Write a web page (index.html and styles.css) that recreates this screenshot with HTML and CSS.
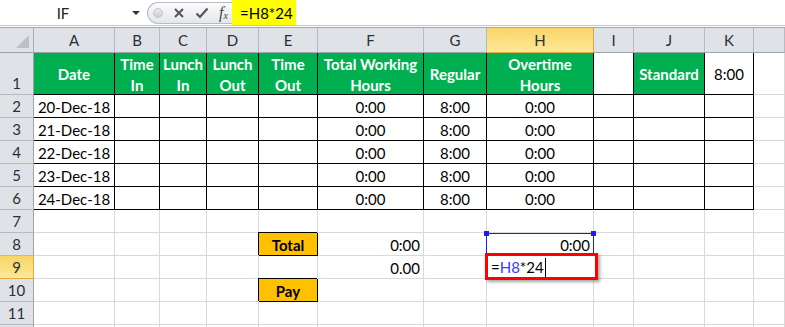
FILE: index.html
```html
<!DOCTYPE html>
<html lang="en">
<head>
    <meta charset="UTF-8">
    <title>Overtime Sheet</title>
    <link rel="stylesheet" href="styles.css">
</head>
<body>

    <div class="formula-bar">
        <div class="name-box"><span class="name">IF</span><span class="arrow"></span></div>
        <div class="fx-buttons">
            <span class="grip"></span>
            <svg class="btn" width="12" height="12" viewBox="0 0 12 12"><path d="M2 2 L10 10 M10 2 L2 10" stroke="#555" stroke-width="2" fill="none"/></svg>
            <svg class="btn" width="14" height="12" viewBox="0 0 14 12"><path d="M1.5 6.5 L5 10 L12.5 1.5" stroke="#555" stroke-width="2.2" fill="none"/></svg>
            <span class="fx"><i>f</i><sub>x</sub></span>
        </div>
        <div class="formula">=H8*24</div>
    </div>

    <div class="sheet">
        <!-- column headers -->
        <div class="corner"><span class="corner-mark"></span></div>
        <div class="ch">A</div><div class="ch">B</div><div class="ch">C</div><div class="ch">D</div><div class="ch">E</div><div class="ch">F</div><div class="ch">G</div><div class="ch sel">H</div><div class="ch">I</div><div class="ch">J</div><div class="ch">K</div><div class="ch"></div>

        <!-- row 1 -->
        <div class="rh">1</div>
        <div class="cell g">Date</div>
        <div class="cell g">Time<br>In</div>
        <div class="cell g">Lunch<br>In</div>
        <div class="cell g">Lunch<br>Out</div>
        <div class="cell g">Time<br>Out</div>
        <div class="cell g">Total Working<br>Hours</div>
        <div class="cell g">Regular</div>
        <div class="cell g">Overtime<br>Hours</div>
        <div class="cell b"></div>
        <div class="cell g">Standard</div>
        <div class="cell b c">8:00</div>
        <div class="cell"></div>

        <!-- rows 2-6 -->
        <div class="rh">2</div><div class="cell b c">20-Dec-18</div><div class="cell b"></div><div class="cell b"></div><div class="cell b"></div><div class="cell b"></div><div class="cell b c">0:00</div><div class="cell b c">8:00</div><div class="cell b c">0:00</div><div class="cell b"></div><div class="cell b"></div><div class="cell b"></div><div class="cell"></div>
        <div class="rh">3</div><div class="cell b c">21-Dec-18</div><div class="cell b"></div><div class="cell b"></div><div class="cell b"></div><div class="cell b"></div><div class="cell b c">0:00</div><div class="cell b c">8:00</div><div class="cell b c">0:00</div><div class="cell b"></div><div class="cell b"></div><div class="cell b"></div><div class="cell"></div>
        <div class="rh">4</div><div class="cell b c">22-Dec-18</div><div class="cell b"></div><div class="cell b"></div><div class="cell b"></div><div class="cell b"></div><div class="cell b c">0:00</div><div class="cell b c">8:00</div><div class="cell b c">0:00</div><div class="cell b"></div><div class="cell b"></div><div class="cell b"></div><div class="cell"></div>
        <div class="rh">5</div><div class="cell b c">23-Dec-18</div><div class="cell b"></div><div class="cell b"></div><div class="cell b"></div><div class="cell b"></div><div class="cell b c">0:00</div><div class="cell b c">8:00</div><div class="cell b c">0:00</div><div class="cell b"></div><div class="cell b"></div><div class="cell b"></div><div class="cell"></div>
        <div class="rh">6</div><div class="cell b c">24-Dec-18</div><div class="cell b"></div><div class="cell b"></div><div class="cell b"></div><div class="cell b"></div><div class="cell b c">0:00</div><div class="cell b c">8:00</div><div class="cell b c">0:00</div><div class="cell b"></div><div class="cell b"></div><div class="cell b"></div><div class="cell"></div>

        <!-- row 7 -->
        <div class="rh">7</div><div class="cell"></div><div class="cell"></div><div class="cell"></div><div class="cell"></div><div class="cell"></div><div class="cell"></div><div class="cell"></div><div class="cell"></div><div class="cell"></div><div class="cell"></div><div class="cell"></div><div class="cell"></div>

        <!-- row 8 -->
        <div class="rh">8</div><div class="cell"></div><div class="cell"></div><div class="cell"></div><div class="cell"></div>
        <div class="cell o">Total</div>
        <div class="cell r">0:00</div>
        <div class="cell"></div>
        <div class="cell r ref">0:00<span class="ref-box"><span class="dot left"></span><span class="dot right"></span></span></div>
        <div class="cell"></div><div class="cell"></div><div class="cell"></div><div class="cell"></div>

        <!-- row 9 -->
        <div class="rh sel">9</div><div class="cell"></div><div class="cell"></div><div class="cell"></div><div class="cell"></div><div class="cell"></div>
        <div class="cell r">0.00</div>
        <div class="cell"></div>
        <div class="cell edit"><span class="edit-box">=<span class="ref-text">H8</span>*24<span class="caret"></span></span></div>
        <div class="cell"></div><div class="cell"></div><div class="cell"></div><div class="cell"></div>

        <!-- row 10 -->
        <div class="rh">10</div><div class="cell"></div><div class="cell"></div><div class="cell"></div><div class="cell"></div>
        <div class="cell o">Pay</div>
        <div class="cell"></div><div class="cell"></div><div class="cell"></div><div class="cell"></div><div class="cell"></div><div class="cell"></div><div class="cell"></div>

        <!-- row 11 -->
        <div class="rh">11</div><div class="cell"></div><div class="cell"></div><div class="cell"></div><div class="cell"></div><div class="cell"></div><div class="cell"></div><div class="cell"></div><div class="cell"></div><div class="cell"></div><div class="cell"></div><div class="cell"></div><div class="cell"></div>

        <!-- row 12, only its top edge shows -->
        <div class="rh"></div><div class="cell"></div><div class="cell"></div><div class="cell"></div><div class="cell"></div><div class="cell"></div><div class="cell"></div><div class="cell"></div><div class="cell"></div><div class="cell"></div><div class="cell"></div><div class="cell"></div><div class="cell"></div>
    </div>

</body>
</html>
```

FILE: styles.css
```css
body {
    margin: 0;
    width: 785px;
    height: 327px;
    overflow: hidden;
    background: #fff;
    color: #000;
    font-family: Lato, "Liberation Sans", sans-serif;
    font-size: 15px;
}

/* Barra de formulas */
.formula-bar {
    display: flex;
    height: 25px;
    border-bottom: 1px solid #c4c7cc;
}

.name-box {
    width: 147px;
    display: flex;
    align-items: center;
}

.name {
    flex: 1;
    text-align: center;
    padding-right: 6px;
    color: #222;
}

.arrow {
    width: 0;
    height: 0;
    margin-right: 7px;
    border-style: solid;
    border-width: 4px 4px 0 4px;
    border-color: #333 transparent transparent transparent;
}

.fx-buttons {
    width: 85px;
    height: 22px;
    margin-top: 2px;
    box-sizing: border-box;
    display: flex;
    align-items: center;
    gap: 10px;
    padding-left: 5px;
    background: linear-gradient(#fbfbfc, #e4e7eb);
    border: 1px solid #b8bcc2;
    border-right: none;
    border-radius: 11px 0 0 11px;
}

.grip {
    width: 8px;
    height: 8px;
    border-radius: 50%;
    background: linear-gradient(#e9ebee, #c9cdd2);
    border: 1px solid #c3c6cb;
}

.btn {
    display: block;
}

.fx {
    font-family: "Liberation Serif", serif;
    font-size: 16px;
    color: #444;
}

.fx sub {
    font-size: 10px;
    font-style: italic;
    vertical-align: -1px;
}

.formula {
    width: 64px;
    box-sizing: border-box;
    padding-left: 8px;
    display: flex;
    align-items: center;
    background: #ffff00;
}

/* Hoja */
.sheet {
    display: grid;
    grid-template-columns: 34px 81px 45px 47px 52px 59px 106px 63px 107px 40px 71px 49px 31px;
    grid-template-rows: 25px 42px repeat(11, 23px);
    margin-top: 1px;
    border-top: 1px solid #a3a8ae;
}

.corner {
    position: relative;
    background: #dfe3e8;
    border-right: 1px solid #a9aeb4;
    border-bottom: 1px solid #9da3aa;
}

.corner-mark {
    position: absolute;
    right: 4px;
    bottom: 4px;
    width: 0;
    height: 0;
    border-style: solid;
    border-width: 0 0 13px 13px;
    border-color: transparent transparent #bcc1c7 transparent;
}

.ch, .rh {
    box-sizing: border-box;
    display: flex;
    justify-content: center;
    background: #dfe3e8;
    color: #2b2f35;
}

.ch {
    align-items: center;
    border-right: 1px solid #b7bbc1;
    border-bottom: 1px solid #9da3aa;
}

.rh {
    align-items: flex-end;
    line-height: 21px;
    border-right: 1px solid #9da3aa;
    border-bottom: 1px solid #b7bbc1;
}

.ch.sel, .rh.sel {
    background: linear-gradient(#f9d468, #fde995);
    border-color: #e2a645;
}

.cell {
    box-sizing: border-box;
    display: flex;
    align-items: center;
    padding: 1px 3px 0;
    white-space: nowrap;
    border-right: 1px solid #d9d9d9;
    border-bottom: 1px solid #d9d9d9;
}

.cell.b {
    border-right-color: #000;
    border-bottom-color: #000;
}

.cell.c {
    justify-content: center;
}

.cell.r {
    justify-content: flex-end;
}

.cell.g {
    justify-content: center;
    text-align: center;
    line-height: 21px;
    padding: 2px 0 0;
    background: #00b050;
    color: #fff;
    font-weight: bold;
    border-right-color: #000;
    border-bottom-color: #000;
}

.cell.o {
    justify-content: center;
    background: #ffc000;
    font-weight: bold;
    border-right-color: #000;
    border-bottom-color: #000;
    box-shadow: -1px -1px 0 #000;
}

/* Referencia H8 y celda en edicion */
.ref, .edit {
    position: relative;
    overflow: visible;
}

.ref-box {
    position: absolute;
    left: -1px;
    top: 0;
    width: 108px;
    height: 23px;
    box-sizing: border-box;
    border: 1px solid #1a1aff;
}

.dot {
    position: absolute;
    top: -3px;
    width: 5px;
    height: 5px;
    background: #1a1aff;
}

.dot.left { left: -3px; }
.dot.right { right: -3px; }

.edit-box {
    position: absolute;
    left: -2px;
    top: -3px;
    width: 113px;
    height: 27px;
    box-sizing: border-box;
    display: flex;
    align-items: center;
    padding: 1px 0 0 3px;
    background: #fff;
    border: 3px solid #ff0000;
    box-shadow: 2px 2px 3px rgba(0, 0, 0, 0.35);
    z-index: 2;
}

.ref-text {
    color: #3b3bff;
}

.caret {
    width: 1px;
    height: 19px;
    margin-left: 1px;
    background: #000;
}
```
